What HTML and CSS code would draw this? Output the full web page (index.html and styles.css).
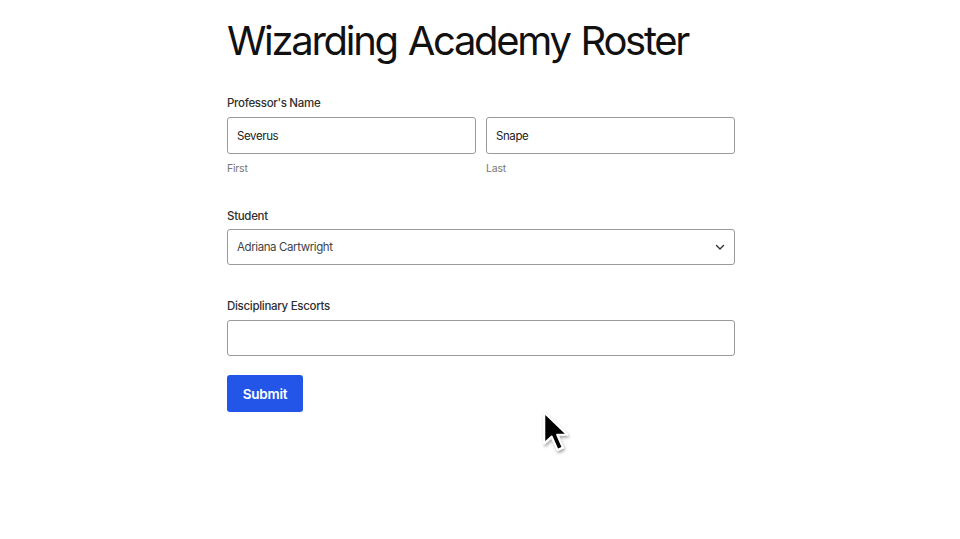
FILE: index.html
```html
<!DOCTYPE html>
<html lang="en">
<head>
<meta charset="utf-8">
<title>Wizarding Academy Roster</title>
<link rel="stylesheet" href="styles.css">
</head>
<body>
<main class="page">
  <h1 class="title">Wizarding Academy Roster</h1>
  <form class="form">
    <div class="field">
      <div class="label">Professor's Name</div>
      <div class="name-row">
        <div class="name-col">
          <div class="input">Severus</div>
          <div class="hint">First</div>
        </div>
        <div class="name-col">
          <div class="input">Snape</div>
          <div class="hint">Last</div>
        </div>
      </div>
    </div>
    <div class="field field-student">
      <div class="label">Student</div>
      <div class="input select">
        <span class="select-value">Adriana Cartwright</span>
        <svg class="chevron" width="12" height="12" viewBox="0 0 12 12"><path d="M2.5 4.5 L6 8 L9.5 4.5" fill="none" stroke="#333" stroke-width="1.4" stroke-linecap="round" stroke-linejoin="round"/></svg>
      </div>
    </div>
    <div class="field field-escorts">
      <div class="label">Disciplinary Escorts</div>
      <div class="input"></div>
    </div>
    <div class="button">Submit</div>
  </form>
  <svg class="cursor" width="32" height="50" viewBox="0 0 30 46">
    <defs>
      <filter id="sh" x="-30%" y="-30%" width="160%" height="160%">
        <feDropShadow dx="1" dy="2" stdDeviation="1.5" flood-color="#000" flood-opacity="0.35"/>
      </filter>
    </defs>
    <path filter="url(#sh)" d="M3 2 L3 31 L10 24.5 L15.5 37 L20.5 34.8 L15.2 22.8 L24.5 22.5 Z" fill="#000" stroke="#fff" stroke-width="2" stroke-linejoin="round"/>
  </svg>
</main>
</body>
</html>
```
FILE: styles.css
```css
html, body {
  margin: 0;
  padding: 0;
  background: #ffffff;
}
body {
  font-family: "Inter", "Noto Sans", sans-serif;
  color: #1c1c1c;
}
.page {
  position: relative;
  width: 960px;
  height: 539px;
  box-sizing: border-box;
  padding-left: 227px;
  padding-top: 15px;
}
.title {
  margin: 0;
  font-size: 40px;
  font-weight: 400;
  letter-spacing: -2.3px;
  word-spacing: 2px;
  line-height: 52px;
  color: #111;
}
.form {
  width: 508px;
  display: flex;
  flex-direction: column;
  margin-top: 28px;
}
.label {
  font-size: 11.5px;
  font-weight: 500;
  letter-spacing: -0.3px;
  color: #303030;
  line-height: 16px;
  margin-bottom: 6px;
}
.name-row {
  display: flex;
  gap: 10px;
}
.name-col {
  flex: 1;
  display: flex;
  flex-direction: column;
}
.input {
  box-sizing: border-box;
  height: 37px;
  border: 1px solid #9a9a9a;
  border-radius: 3px;
  padding: 0 9px;
  display: flex;
  align-items: center;
  font-size: 11.5px;
  letter-spacing: -0.4px;
  color: #222;
}
.hint {
  font-size: 10.5px;
  letter-spacing: -0.2px;
  color: #777;
  margin-top: 8px;
  line-height: 14px;
}
.field-student {
  margin-top: 32px;
}
.select {
  justify-content: space-between;
  height: 36px;
  margin-top: -1px;
}
.select-value {
  color: #444;
}
.chevron {
  margin-right: -1px;
}
.field-escorts {
  margin-top: 33px;
}
.field-escorts .input {
  height: 36px;
}
.button {
  margin-top: 19px;
  width: 76px;
  height: 37px;
  box-sizing: border-box;
  background: #2356e8;
  border-radius: 3px;
  color: #fff;
  font-size: 13.5px;
  font-weight: 600;
  letter-spacing: -0.2px;
  display: flex;
  align-items: center;
  justify-content: center;
}
.cursor {
  position: absolute;
  left: 541px;
  top: 410px;
}
```
